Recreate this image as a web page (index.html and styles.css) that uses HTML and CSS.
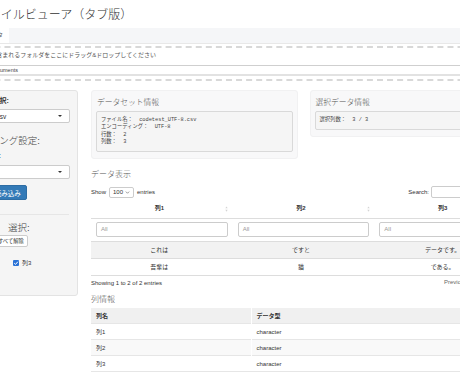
FILE: index.html
```html
<!DOCTYPE html>
<html lang="ja">
<head>
<meta charset="utf-8">
<title>CSVファイルビューア</title>
<link rel="stylesheet" href="styles.css">
</head>
<body>
<div class="page">
  <h2 class="title">CSVファイルビューア（タブ版）</h2>
  <div class="tabs">
    <div class="tab active">データ</div>
  </div>
  <div class="drop">
    <p class="drop-text">CSVファイルが含まれるフォルダをここにドラッグ&amp;ドロップしてください</p>
    <div class="path">C:/Users/user/Documents</div>
  </div>
  <div class="layout">
    <aside class="well">
      <label class="lbl">CSVファイルを選択:</label>
      <div class="select"><span>codetest_UTF-8.csv</span><span class="caret"></span></div>
      <h3 class="side-h enc-h">エンコーディング設定:</h3>
      <label class="lbl lbl2">エンコーディング:</label>
      <div class="select select2"><span>UTF-8</span><span class="caret"></span></div>
      <button class="btn btn-primary">CSVファイルを読み込み</button>
      <hr class="sep">
      <h3 class="side-h col-h">表示列　選択:</h3>
      <div class="btn-row">
        <button class="btn btn-sm">すべて選択</button>
        <button class="btn btn-sm">すべて解除</button>
      </div>
      <div class="checks">
        <label class="chk"><span class="box"><svg viewBox="0 0 6 6" width="6" height="6"><path d="M1.2 3.1 L2.5 4.4 L4.9 1.7" fill="none" stroke="#fff" stroke-width="1"/></svg></span>列1</label>
        <label class="chk"><span class="box"><svg viewBox="0 0 6 6" width="6" height="6"><path d="M1.2 3.1 L2.5 4.4 L4.9 1.7" fill="none" stroke="#fff" stroke-width="1"/></svg></span>列2</label>
        <label class="chk"><span class="box"><svg viewBox="0 0 6 6" width="6" height="6"><path d="M1.2 3.1 L2.5 4.4 L4.9 1.7" fill="none" stroke="#fff" stroke-width="1"/></svg></span>列3</label>
      </div>
    </aside>
    <main class="main">
      <div class="panels">
        <section class="panel">
          <h4 class="ph">データセット情報</h4>
          <pre class="info">ファイル名：  codetest_UTF-8.csv
エンコーディング：  UTF-8
行数：  2
列数：  3</pre>
        </section>
        <section class="panel">
          <h4 class="ph">選択データ情報</h4>
          <pre class="info">選択列数：  3 / 3</pre>
        </section>
      </div>

      <h4 class="sec-h">データ表示</h4>
      <div class="dt-top">
        <div class="len">Show <span class="len-sel">100<svg viewBox="0 0 6 4" width="5" height="3"><path d="M0.8 0.8 L3 3 L5.2 0.8" fill="none" stroke="#555" stroke-width="0.8"/></svg></span> entries</div>
        <div class="search">Search: <span class="search-in"></span></div>
      </div>
      <table class="dt">
        <thead>
          <tr class="hd">
            <th><span class="thl">列1</span><svg class="sort" viewBox="0 0 4 8" width="3" height="6"><path d="M2 0.5 L3.6 3 L0.4 3 Z M2 7.5 L3.6 5 L0.4 5 Z" fill="#d4d4d4"/></svg></th>
            <th><span class="thl">列2</span><svg class="sort" viewBox="0 0 4 8" width="3" height="6"><path d="M2 0.5 L3.6 3 L0.4 3 Z M2 7.5 L3.6 5 L0.4 5 Z" fill="#d4d4d4"/></svg></th>
            <th><span class="thl">列3</span><svg class="sort" viewBox="0 0 4 8" width="3" height="6"><path d="M2 0.5 L3.6 3 L0.4 3 Z M2 7.5 L3.6 5 L0.4 5 Z" fill="#d4d4d4"/></svg></th>
          </tr>
          <tr class="flt">
            <td><span class="fin">All</span></td>
            <td><span class="fin">All</span></td>
            <td><span class="fin">All</span></td>
          </tr>
        </thead>
        <tbody>
          <tr class="odd"><td>これは</td><td>ですと</td><td>データです。</td></tr>
          <tr><td>吾輩は</td><td>猫</td><td>である。</td></tr>
        </tbody>
      </table>
      <div class="dt-bottom">
        <div class="dt-info">Showing 1 to 2 of 2 entries</div>
        <div class="pager"><span class="pg">Previous</span><span class="pg cur">1</span><span class="pg">Next</span></div>
      </div>

      <h4 class="sec-h sec2">列情報</h4>
      <table class="ct">
        <thead><tr><th>列名</th><th>データ型</th></tr></thead>
        <tbody>
          <tr><td>列1</td><td>character</td></tr>
          <tr><td>列2</td><td>character</td></tr>
          <tr><td>列3</td><td>character</td></tr>
        </tbody>
      </table>
    </main>
  </div>
</div>
</body>
</html>
```

FILE: styles.css
```css
* { box-sizing: border-box; }
html, body { margin: 0; padding: 0; background: #fff; }
body {
  font-family: "Liberation Sans", "Noto Sans CJK JP", sans-serif;
  font-size: 6px;
  color: #333;
  overflow: hidden;
}
.page { margin-left: -66px; width: 600px; }

.title {
  margin: 7.5px 0 5.5px 18px;
  font-size: 12px;
  line-height: 15px;
  font-weight: 300;
  color: #333;
}

.tabs {
  display: flex;
  height: 16px;
  background: #f5f6f8;
  border-bottom: 1px solid #e8e8e8;
}
.tab {
  width: 75px;
  background: #fff;
  text-align: right;
  padding-right: 6px;
  line-height: 15px;
  font-size: 6px;
  color: #555;
}

.drop {
  margin-top: 2px;
  border-top: 2px dashed #d8d8d8;
  border-bottom: 2px dashed #d8d8d8;
  padding: 3px 0 3px 20px;
}
.drop-text {
  margin: 0;
  font-size: 6px;
  line-height: 8px;
  color: #555;
  white-space: nowrap;
}
.path {
  margin-top: 6px;
  margin-left: -5px;
  height: 11px;
  border-top: 1px solid #cfcfcf;
  border-bottom: 2px solid #e2e2e2;
  padding-left: 6px;
  font-size: 5.5px;
  line-height: 8px;
  color: #444;
}

.layout {
  display: flex;
  gap: 13px;
  margin-top: 9px;
  align-items: flex-start;
}

/* sidebar */
.well {
  width: 144px;
  height: 206px;
  flex: none;
  background: #f5f5f5;
  border: 1px solid #e3e3e3;
  border-radius: 3px;
  padding: 6px 8px;
  display: flex;
  flex-direction: column;
  align-items: flex-start;
}
.lbl {
  font-size: 7px;
  line-height: 8px;
  font-weight: 700;
  white-space: nowrap;
}
.select {
  margin-top: 4px;
  width: 127px;
  height: 14px;
  background: #fff;
  border: 1px solid #ccc;
  border-radius: 2px;
  display: flex;
  align-items: center;
  padding: 0 7px 0 4px;
  font-size: 6.5px;
  color: #333;
  white-space: nowrap;
}
.caret {
  margin-left: auto;
  width: 0; height: 0;
  border-left: 2px solid transparent;
  border-right: 2px solid transparent;
  border-top: 2.5px solid #333;
}
.side-h {
  margin: 11.5px 0 0;
  font-size: 9.5px;
  line-height: 11px;
  font-weight: 300;
  color: #444;
  white-space: nowrap;
}
.lbl2 { margin-top: 6.5px; }
.select2 { margin-top: 5px; }
.btn {
  font-family: inherit;
  border-radius: 2px;
  white-space: nowrap;
  cursor: pointer;
}
.btn-primary {
  margin-top: 6px;
  height: 15px;
  padding: 0 5px;
  font-size: 6.5px;
  background: #337ab7;
  border: 1px solid #2e6da4;
  color: #fff;
}
.sep {
  align-self: stretch;
  margin: 14px 0 0;
  border: 0;
  border-top: 1px solid #e6e6e6;
}
.col-h { margin-top: 7px; margin-left: 27px; }
.btn-row { display: flex; gap: 17px; margin-top: 1.5px; }
.btn-sm {
  height: 12px;
  padding: 0 3px;
  font-size: 5.3px;
  background: #fff;
  border: 1px solid #ccc;
  color: #333;
}
.checks { display: flex; margin-top: 12px; }
.chk {
  width: 35px;
  display: flex;
  align-items: center;
  gap: 3px;
  font-size: 6px;
  line-height: 8px;
}
.box {
  width: 6px; height: 6px;
  background: #2a72d6;
  border-radius: 1px;
  display: flex;
}

/* main */
.main { width: 425px; flex: none; }
.panels { display: flex; gap: 12px; align-items: flex-start; }
.panel {
  width: 206.5px;
  background: #f8f8f9;
  border: 1px solid #f1f1f2;
  border-radius: 3px;
  padding: 7px 4px 6px;
}
.ph {
  margin: 0 0 4px 1px;
  font-size: 7.75px;
  line-height: 9px;
  font-weight: 300;
  color: #555;
  white-space: nowrap;
}
.info {
  margin: 0;
  padding: 4.5px 4px;
  background: #f5f5f5;
  border: 1px solid #d9d9d9;
  border-radius: 2px;
  font-family: "Liberation Mono", "Noto Sans CJK JP", monospace;
  font-size: 5.3px;
  line-height: 7.5px;
  color: #444;
  white-space: pre;
  overflow: hidden;
}

.sec-h {
  margin: 11px 0 0;
  font-size: 8px;
  line-height: 10px;
  font-weight: 300;
  color: #555;
}
.dt-top {
  margin-top: 6px;
  height: 12px;
  display: flex;
  justify-content: space-between;
  align-items: center;
  font-size: 6px;
}
.len { display: flex; align-items: center; gap: 3px; }
.len-sel {
  width: 25px;
  height: 11px;
  border: 1px solid #ccc;
  border-radius: 2px;
  display: flex;
  align-items: center;
  justify-content: space-between;
  padding: 0 3px;
  background: #fff;
}
.search { display: flex; align-items: center; gap: 2px; }
.search-in {
  width: 85px;
  height: 12px;
  border: 1px solid #ccc;
  border-radius: 2px;
  background: #fff;
}

.dt {
  width: 100%;
  border-collapse: collapse;
  table-layout: fixed;
  font-size: 6px;
}
.dt th {
  height: 20px;
  padding: 0 4px 0 3px;
  border-bottom: 1px solid #ddd;
  font-weight: 700;
  vertical-align: middle;
}
.dt .hd th > .thl { display: inline-block; width: calc(100% - 5px); text-align: center; }
.dt .hd th > .sort { display: inline-block; vertical-align: middle; margin-left: 1px; }
.flt td { height: 23px; padding: 0 5px; }
.fin {
  display: block;
  height: 15px;
  line-height: 13px;
  border: 1px solid #ccc;
  border-radius: 2px;
  padding-left: 4px;
  color: #999;
  background: #fff;
}
.dt tbody td {
  height: 17px;
  padding: 0 8px 0 3px;
  text-align: center;
  border-top: 1px solid #ddd;
  white-space: nowrap;
}
.dt tbody tr:last-child td { border-bottom: 1px solid #ddd; }
.dt tbody tr.odd td { background: #f2f2f2; }

.dt-bottom {
  margin-top: 3px;
  height: 8px;
  display: flex;
  justify-content: space-between;
  align-items: center;
  font-size: 6px;
}
.pager { display: flex; gap: 6px; color: #666; }
.pg { padding: 0 3px; }
.pg.cur { padding: 0 5px; border: 1px solid #ddd; border-radius: 2px; }

.sec2 { margin-top: 8px; }
.ct {
  margin-top: 3px;
  width: 100%;
  border-collapse: collapse;
  table-layout: fixed;
  font-size: 6px;
}
.ct th, .ct td {
  height: 16px;
  padding: 0 5px;
  text-align: left;
}
.ct th:first-child, .ct td:first-child { width: 160px; }
.ct th + th, .ct td + td { border-left: 1px solid #fff; }
.ct thead th { background: #f0f0f0; font-weight: 700; }
.ct tbody td { border-top: 1px solid #e6e6e6; }
.ct tbody tr:nth-child(even) td { background: #f9f9f9; }
.ct tbody tr:last-child td { border-bottom: 1px solid #e6e6e6; }
```
